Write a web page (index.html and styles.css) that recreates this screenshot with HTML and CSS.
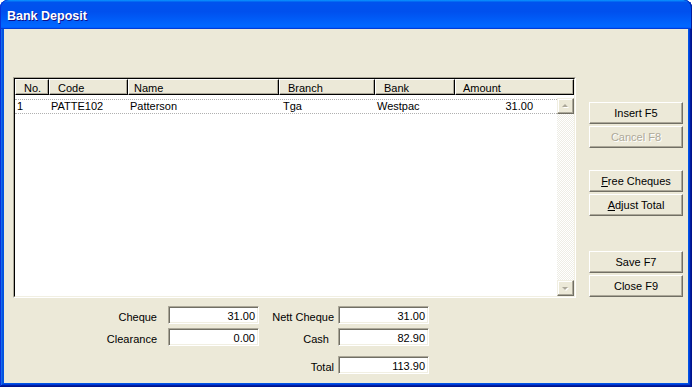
FILE: index.html
```html
<!DOCTYPE html>
<html>
<head>
<meta charset="utf-8">
<link rel="stylesheet" href="styles.css">
</head>
<body>
<div class="window">
  <div class="titlebar"><span class="title">Bank Deposit</span></div>
  <div class="client">
    <div class="main">
      <div class="list">
        <div class="list-inner">
          <div class="header">
            <div class="hcell c-no">No.</div>
            <div class="hcell c-code">Code</div>
            <div class="hcell c-name">Name</div>
            <div class="hcell c-branch">Branch</div>
            <div class="hcell c-bank">Bank</div>
            <div class="hcell c-amount">Amount</div>
          </div>
          <div class="list-body">
            <div class="rows">
              <div class="row">
                <div class="cell c-no">1</div>
                <div class="cell c-code">PATTE102</div>
                <div class="cell c-name">Patterson</div>
                <div class="cell c-branch">Tga</div>
                <div class="cell c-bank">Westpac</div>
                <div class="cell c-amt">31.00</div>
              </div>
            </div>
            <div class="scrollbar">
              <div class="sbtn">
                <svg width="15" height="14" viewBox="0 0 15 14"><polygon points="5,9 8,6 11,9" fill="#fff"/><polygon points="4,8 7,5 10,8" fill="#ACA899"/></svg>
              </div>
              <div class="track"></div>
              <div class="sbtn">
                <svg width="15" height="14" viewBox="0 0 15 14"><polygon points="5,7 11,7 8,10" fill="#fff"/><polygon points="4,6 10,6 7,9" fill="#ACA899"/></svg>
              </div>
            </div>
          </div>
        </div>
      </div>
      <div class="buttons">
        <button class="btn">Insert F5</button>
        <button class="btn disabled">Cancel F8</button>
        <button class="btn gap-a"><u>F</u>ree Cheques</button>
        <button class="btn"><u>A</u>djust Total</button>
        <button class="btn gap-b">Save F7</button>
        <button class="btn">Close F9</button>
      </div>
    </div>
    <div class="totals">
      <div class="label l1">Cheque</div>
      <div class="field">31.00</div>
      <div class="label l2">Nett Cheque</div>
      <div class="field">31.00</div>
      <div class="label l1">Clearance</div>
      <div class="field">0.00</div>
      <div class="label l2 cash">Cash</div>
      <div class="field">82.90</div>
      <div class="label l2 total-label">Total</div>
      <div class="field total-field">113.90</div>
    </div>
  </div>
</div>
</body>
</html>
```

FILE: styles.css
```css
html, body {
  margin: 0;
  padding: 0;
  background: #ffffff;
}

.window {
  width: 692px;
  height: 387px;
  box-sizing: border-box;
  padding: 0 4px 4px 4px;
  display: flex;
  flex-direction: column;
  background: #0054E3;
  border-radius: 8px 8px 0 0;
  overflow: hidden;
  box-shadow: inset -1px -1px #00138c, inset 1px 1px #0831d9, inset -2px -2px #001ea0, inset 2px 2px #166aee, inset -3px -3px #003bda, inset 3px 3px #0855dd;
  font-family: "Liberation Sans", Arial, sans-serif;
  font-size: 11px;
  color: #000;
}

.titlebar {
  height: 29px;
  margin: 0 -4px;
  flex: 0 0 auto;
  display: flex;
  align-items: center;
  padding: 2px 0 0 7px;
  box-sizing: border-box;
  background: linear-gradient(180deg, #0997ff, #0053ee 8%, #0050ee 40%, #06f 88%, #06f 93%, #005bff 95%, #003dd7 96%, #003dd7);
  box-shadow: inset 1px 0 #0831d9, inset -1px 0 #001ea0;
  border-radius: 8px 8px 0 0;
}

.title {
  font-family: "Liberation Sans", Arial, sans-serif;
  font-weight: bold;
  font-size: 12.5px;
  color: #fff;
  text-shadow: 1px 1px #0f1089;
}

.client {
  flex: 1 1 auto;
  background: #ECE9D8;
  padding: 48px 0 0 9px;
}

.main {
  display: flex;
  gap: 13px;
}

.list {
  width: 563px;
  height: 221px;
  box-sizing: border-box;
  border: 1px solid;
  border-color: #ACA899 #fff #fff #ACA899;
}

.list-inner {
  height: 100%;
  box-sizing: border-box;
  border: 1px solid;
  border-color: #000 #F1EFE2 #F1EFE2 #000;
  background: #fff;
  display: flex;
  flex-direction: column;
}

.header {
  display: flex;
  height: 16px;
  flex: 0 0 auto;
}

.hcell {
  box-sizing: border-box;
  height: 16px;
  border: 1px solid;
  border-color: #fff #000 #000 #fff;
  box-shadow: inset -1px -1px #ACA899;
  background: #ECE9D8;
  padding: 2px 0 0 8px;
  line-height: 13px;
  white-space: nowrap;
  overflow: hidden;
}

.c-no { width: 34px; }
.c-code { width: 79px; }
.c-name { width: 151px; }
.c-branch { width: 96px; }
.c-bank { width: 80px; }
.c-amount { width: 119px; }

.hcell.c-name { padding-left: 5px; }
.hcell.c-amount { padding-left: 7px; }

.list-body {
  flex: 1 1 auto;
  display: flex;
}

.rows {
  flex: 1 1 auto;
  padding-top: 4px;
}

.row {
  display: flex;
  border-top: 1px dotted #B0B0B0;
  border-bottom: 1px dotted #B0B0B0;
  height: 13px;
  line-height: 13px;
}

.cell {
  box-sizing: border-box;
  padding-left: 2px;
  white-space: nowrap;
}

.cell.c-branch { padding-left: 4px; }

.c-amt {
  flex: 1 1 auto;
  text-align: right;
  padding-right: 24px;
}

.scrollbar {
  width: 17px;
  margin-top: 3px;
  display: flex;
  flex-direction: column;
}

.sbtn {
  box-sizing: border-box;
  width: 17px;
  height: 16px;
  flex: 0 0 auto;
  background: #ECE9D8;
  border: 1px solid;
  border-color: #F1EFE2 #716F64 #716F64 #F1EFE2;
  box-shadow: inset -1px -1px #ACA899, inset 1px 1px #fff;
  display: flex;
  align-items: center;
  justify-content: center;
}

.track {
  flex: 1 1 auto;
  background: repeating-conic-gradient(#fff 0% 25%, #EEEDE5 0% 50%) 0 0 / 2px 2px;
}

.buttons {
  width: 94px;
  display: flex;
  flex-direction: column;
  gap: 2px;
  padding-top: 25px;
}

.btn {
  box-sizing: border-box;
  width: 94px;
  height: 22px;
  margin: 0;
  padding: 0;
  background: #ECE9D8;
  border: 1px solid;
  border-color: #fff #716F64 #716F64 #fff;
  box-shadow: inset -1px -1px #ACA899;
  font-family: "Liberation Sans", Arial, sans-serif;
  font-size: 11px;
  color: #000;
  text-align: center;
}

.btn.disabled {
  color: #ACA899;
  text-shadow: 1px 1px #fff;
}

.gap-a { margin-top: 20px; }
.gap-b { margin-top: 33px; }

.totals {
  margin-top: 8px;
  display: grid;
  grid-template-columns: 155px 91px 79px 91px;
  grid-template-rows: 18px 18px 24px;
  row-gap: 4px;
  align-items: start;
}

.label {
  text-align: right;
  white-space: nowrap;
  height: 18px;
  box-sizing: border-box;
  padding-top: 2px;
  line-height: 18px;
}

.l1 { padding-right: 11px; }
.l2 { padding-right: 4px; }
.cash { padding-right: 9px; }

.total-label {
  grid-column: 3;
  grid-row: 3;
  align-self: end;
}

.field {
  box-sizing: border-box;
  height: 18px;
  background: #fff;
  border: 1px solid;
  border-color: #ACA899 #fff #fff #ACA899;
  box-shadow: inset 1px 1px #716F64, inset -1px -1px #F1EFE2;
  text-align: right;
  padding: 2px 3px 0 0;
  line-height: 14px;
}

.total-field {
  grid-column: 4;
  grid-row: 3;
  align-self: end;
}
```
